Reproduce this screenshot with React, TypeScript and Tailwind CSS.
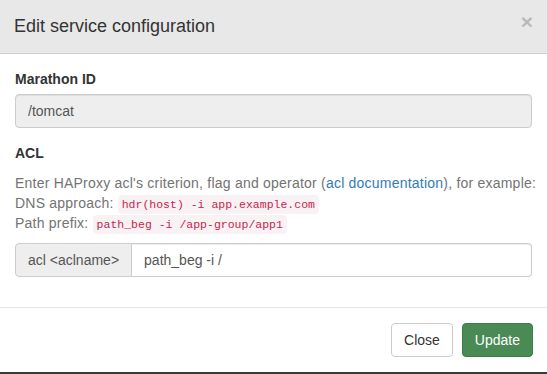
import React from "react";

export default function App() {
  return (
    <div className="h-[374px] w-[547px] overflow-hidden bg-[#3a3a3a] font-['Liberation_Sans',Arial,sans-serif] text-[14px] leading-5 text-[#333]">
      <div className="flex h-[372px] flex-col bg-white">
        {/* header */}
        <div className="flex h-[54px] shrink-0 items-center justify-between border-b border-[#cfcfcf] bg-[#e8e8e8] pl-[14px] pr-[14px]">
          <h4 className="text-[18px] leading-[23px] text-[#333]">Edit service configuration</h4>
          <button className="-mt-[10px] text-[21px] font-bold leading-none text-black opacity-20">×</button>
        </div>

        {/* body */}
        <div className="p-[15px]">
          <div className="mb-[15px]">
            <label className="mb-[5px] block font-bold">Marathon ID</label>
            <input
              disabled
              value="/tomcat"
              readOnly
              className="block h-[34px] w-full rounded-[4px] border border-[#ccc] bg-[#eee] px-3 text-[14px] text-[#555] shadow-[inset_0_1px_1px_rgba(0,0,0,0.075)]"
            />
          </div>

          <div className="mb-[15px]">
            <label className="mb-[5px] block font-bold">ACL</label>
            <div className="mt-[10px] mb-[10px] whitespace-nowrap text-[#737373] tracking-[0.22px]">
              <div className="h-5">
                Enter HAProxy acl's criterion, flag and operator (
                <a className="text-[#337ab7]">acl documentation</a>), for example:
              </div>
              <div className="h-5">
                DNS approach:{" "}
                <code className="rounded-[4px] bg-[#f9f2f4] px-1 py-[3px] font-['Liberation_Mono',monospace] text-[11.5px] leading-none tracking-normal text-[#c7254e]">
                  hdr(host) -i app.example.com
                </code>
              </div>
              <div className="h-5">
                Path prefix:{" "}
                <code className="rounded-[4px] bg-[#f9f2f4] px-1 py-[3px] font-['Liberation_Mono',monospace] text-[11.5px] leading-none tracking-normal text-[#c7254e]">
                  path_beg -i /app-group/app1
                </code>
              </div>
            </div>
            <div className="flex h-[34px]">
              <span className="flex items-center rounded-l-[4px] border border-[#ccc] bg-[#eee] px-3 text-[#555]">
                acl &lt;aclname&gt;
              </span>
              <input
                defaultValue="path_beg -i /"
                className="min-w-0 flex-1 rounded-r-[4px] border border-l-0 border-[#ccc] px-3 text-[14px] text-[#555] shadow-[inset_0_1px_1px_rgba(0,0,0,0.075)] outline-none"
              />
            </div>
          </div>
        </div>

        {/* footer */}
        <div className="flex flex-1 items-start justify-end gap-[9px] border-t border-[#e5e5e5] px-[14px] pt-[15px]">
          <button className="h-[34px] rounded-[4px] border border-[#ccc] bg-white px-3 text-[#333]">Close</button>
          <button className="h-[34px] rounded-[4px] border border-[#3f7b49] bg-[#4a8a55] px-3 text-white">Update</button>
        </div>
      </div>
    </div>
  );
}
